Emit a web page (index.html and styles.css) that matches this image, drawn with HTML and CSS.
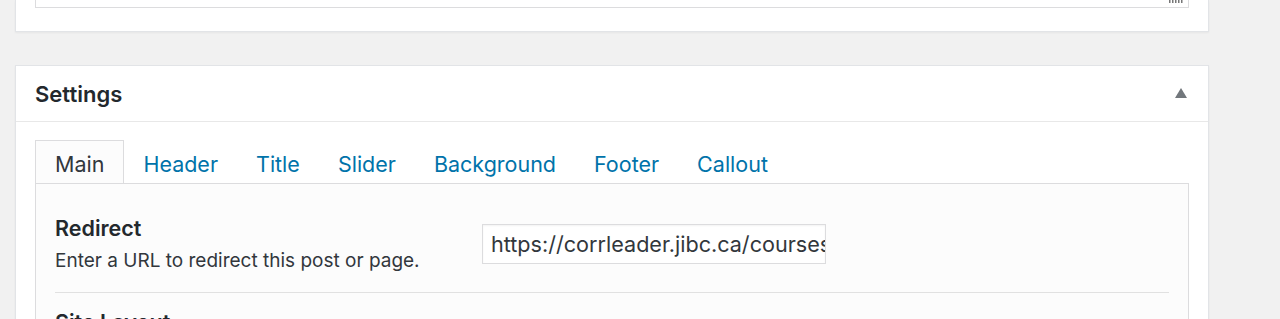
FILE: index.html
```html
<!DOCTYPE html>
<html lang="en">
<head>
<meta charset="utf-8">
<title>Settings</title>
<link rel="stylesheet" href="styles.css">
</head>
<body>
<div class="wrap">
  <div class="card card-top">
    <div class="textarea">
      <svg class="grip" width="16" height="4" viewBox="0 0 16 4"><g fill="#777"><rect x="1" y="0" width="1.5" height="3"/><rect x="4" y="0" width="1.5" height="3"/><rect x="7" y="0" width="1.5" height="3"/><rect x="10" y="0" width="1.5" height="3"/><rect x="13" y="0" width="1.5" height="3"/></g></svg>
    </div>
  </div>

  <div class="card card-settings">
    <div class="card-head">
      <h2 class="card-title">Settings</h2>
      <svg class="toggle" width="12" height="10" viewBox="0 0 12 10"><path d="M6 0 L12 10 L0 10 Z" fill="#72777c"/></svg>
    </div>
    <div class="card-body">
      <ul class="tabs">
        <li class="tab active">Main</li>
        <li class="tab">Header</li>
        <li class="tab">Title</li>
        <li class="tab">Slider</li>
        <li class="tab">Background</li>
        <li class="tab">Footer</li>
        <li class="tab">Callout</li>
      </ul>
      <div class="panel">
        <div class="row">
          <div class="label">
            <div class="field-title">Redirect</div>
            <div class="field-desc">Enter a URL to redirect this post or page.</div>
          </div>
          <div class="control">
            <div class="input">https://corrleader.jibc.ca/courses/</div>
          </div>
        </div>
        <div class="row row-next">
          <div class="label">
            <div class="field-title">Site Layout</div>
          </div>
        </div>
      </div>
    </div>
  </div>
</div>
</body>
</html>
```

FILE: styles.css
```css
html, body {
  margin: 0;
  padding: 0;
  background: #f1f1f1;
  height: 319px;
  overflow: hidden;
}
body {
  font-family: Inter, "Liberation Sans", sans-serif;
  color: #23282d;
}
.wrap {
  padding: 0 71px 0 15px;
}
.card {
  background: #fff;
  border: 1px solid #e2e4e7;
  box-shadow: 0 1px 2px rgba(0, 0, 0, 0.05);
}
.card-top {
  border-top: none;
  height: 31px;
  padding: 0 19px;
}
.textarea {
  height: 7px;
  border: 1px solid #dcdcde;
  border-top: none;
  display: flex;
  justify-content: flex-end;
  align-items: flex-start;
  padding-right: 4px;
}
.grip {
  display: block;
}
.card-settings {
  margin-top: 33px;
}
.card-head {
  height: 55px;
  border-bottom: 1px solid #e8e8e8;
  display: flex;
  align-items: center;
  justify-content: space-between;
  padding: 0 21px 0 19px;
}
.card-title {
  margin: 0;
  font-size: 22px;
  font-weight: 600;
  color: #23282d;
}
.toggle {
  display: block;
  margin-top: -1px;
}
.card-body {
  padding: 18px 19px 0 19px;
}
.tabs {
  list-style: none;
  margin: 0;
  padding: 0;
  display: flex;
  position: relative;
  z-index: 1;
}
.tab {
  font-size: 21.5px;
  line-height: 36px;
  height: 36px;
  padding: 5px 18px 0;
  color: #0073aa;
  border: 1px solid transparent;
  border-bottom: none;
}
.tab.active {
  color: #32373c;
  background: #fcfcfc;
  border-color: #dcdcde;
  height: 37px;
  padding: 5px 19px 0;
}
.panel {
  background: #fcfcfc;
  border: 1px solid #dcdcde;
  padding: 0 19px;
  height: 200px;
}
.row {
  display: flex;
  padding: 30px 0 18px;
  border-bottom: 1px solid #e1e1e1;
}
.row-next {
  border-bottom: none;
  padding-top: 15px;
}
.label {
  width: 427px;
  flex: none;
}
.field-title {
  font-size: 21.5px;
  font-weight: 600;
  line-height: 28px;
  color: #23282d;
}
.field-desc {
  font-size: 19px;
  line-height: 26px;
  margin-top: 6px;
  color: #32373c;
}
.control {
  padding-top: 10px;
}
.input {
  box-sizing: border-box;
  width: 344px;
  height: 40px;
  border: 1px solid #dcdcde;
  background: #fff;
  box-shadow: inset 0 1px 2px rgba(0, 0, 0, 0.05);
  font-size: 21.6px;
  line-height: 38px;
  padding: 0 8px;
  color: #32373c;
  white-space: nowrap;
  overflow: hidden;
}
```
